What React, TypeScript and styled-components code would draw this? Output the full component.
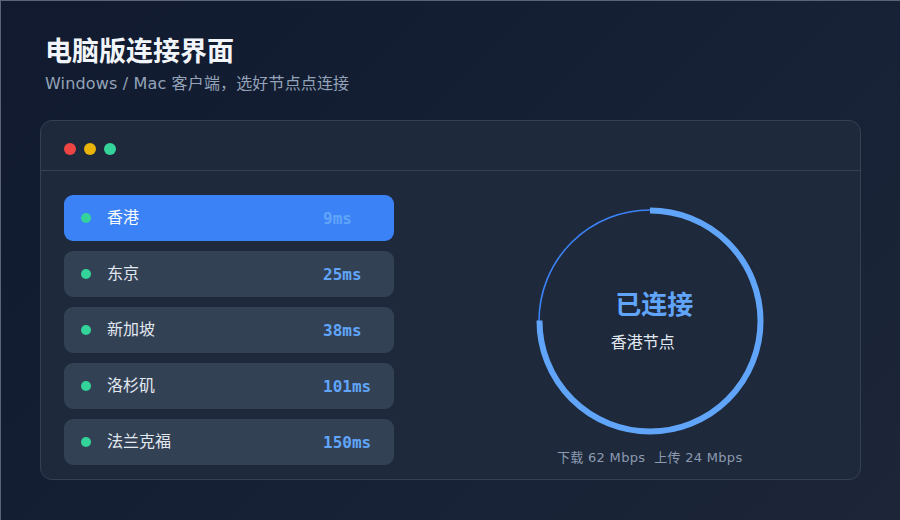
import styled, { createGlobalStyle } from "styled-components";

const GlobalStyle = createGlobalStyle`
  html, body {
    margin: 0;
    padding: 0;
    background: #111827;
  }
  body {
    font-family: "DejaVu Sans", "Noto Sans CJK SC", sans-serif;
  }
`;

const Page = styled.div`
  box-sizing: border-box;
  width: 900px;
  height: 520px;
  padding: 31px 40px 0 39px;
  border-top: 1px solid #5b6474;
  border-left: 1px solid #5b6474;
  background: linear-gradient(135deg, #111a2e 0%, #152035 50%, #1d2638 100%);
  overflow: hidden;
`;

const Intro = styled.header`
  padding-left: 5px;
`;

const Title = styled.h1`
  margin: 0;
  font-family: "Noto Sans CJK SC", sans-serif;
  font-size: 27px;
  line-height: 36px;
  font-weight: 700;
  color: #f1f5f9;
`;

const Subtitle = styled.p`
  margin: 5px 0 0;
  font-size: 16px;
  line-height: 22px;
  letter-spacing: 0.15px;
  color: #94a3b8;
`;

const Window = styled.section`
  box-sizing: border-box;
  margin-top: 25px;
  width: 821px;
  height: 360px;
  background: #1e293b;
  border: 1px solid #334155;
  border-radius: 12px;
  overflow: hidden;
`;

const TitleBar = styled.div`
  display: flex;
  gap: 8px;
  padding: 22px 23px 15px;
  border-bottom: 1px solid #334155;
`;

const Light = styled.span<{ $color: string }>`
  width: 12px;
  height: 12px;
  border-radius: 50%;
  background: ${(p) => p.$color};
`;

const Body = styled.div`
  display: grid;
  grid-template-columns: 1fr 1fr;
  gap: 24px;
  padding: 24px 23px 14px;
`;

const NodeList = styled.ul`
  list-style: none;
  margin: 0;
  padding: 0;
  display: flex;
  flex-direction: column;
  gap: 10px;
`;

const NodeRow = styled.li<{ $active?: boolean }>`
  box-sizing: border-box;
  width: 330px;
  height: 46px;
  display: grid;
  grid-template-columns: 10px 1fr 56px;
  align-items: center;
  column-gap: 16px;
  padding: 0 15px 0 17px;
  border-radius: 9px;
  background: ${(p) => (p.$active ? "#3b82f6" : "#334155")};
  color: ${(p) => (p.$active ? "#f8fafc" : "#e2e8f0")};
`;

const OnlineDot = styled.span`
  width: 10px;
  height: 10px;
  border-radius: 50%;
  background: #34d399;
`;

const NodeName = styled.span`
  font-size: 16px;
  line-height: 22px;
`;

const Latency = styled.span`
  font-family: "DejaVu Sans Mono", "Liberation Mono", monospace;
  font-weight: 700;
  font-size: 16px;
  color: #60a5fa;
`;

const StatusPane = styled.div`
  display: flex;
  flex-direction: column;
  align-items: center;
  padding-top: 12px;
  gap: 14px;
`;

const Dial = styled.div`
  display: grid;
  width: 228px;
  height: 228px;
  & > * {
    grid-area: 1 / 1;
  }
`;

const DialLabel = styled.div`
  display: flex;
  flex-direction: column;
  align-items: center;
  justify-content: center;
  gap: 10px;
`;

const State = styled.div`
  padding-left: 9px;
  font-size: 26px;
  line-height: 34px;
  font-weight: 700;
  color: #60a5fa;
`;

const Location = styled.div`
  padding-right: 14px;
  font-size: 16px;
  line-height: 22px;
  color: #e2e8f0;
`;

const Speed = styled.div`
  font-size: 13px;
  line-height: 18px;
  letter-spacing: 0.3px;
  color: #8c9bb1;
`;

const nodes = [
  { name: "香港", ms: 9 },
  { name: "东京", ms: 25 },
  { name: "新加坡", ms: 38 },
  { name: "洛杉矶", ms: 101 },
  { name: "法兰克福", ms: 150 },
];

function Ring({ progress }: { progress: number }) {
  const r = 110.5;
  const c = 2 * Math.PI * r;
  return (
    <svg width="228" height="228" viewBox="0 0 228 228">
      <circle cx="114" cy="114" r={r + 0.5} fill="none" stroke="#3b82f6" strokeWidth="1.6" />
      <circle
        cx="114"
        cy="114"
        r={r}
        fill="none"
        stroke="#60a5fa"
        strokeWidth="6"
        strokeDasharray={`${c * progress} ${c}`}
        transform="rotate(-90 114 114)"
      />
    </svg>
  );
}

export default function App() {
  return (
    <Page>
      <GlobalStyle />
      <Intro>
        <Title>电脑版连接界面</Title>
        <Subtitle>Windows / Mac 客户端，选好节点点连接</Subtitle>
      </Intro>
      <Window>
        <TitleBar>
          <Light $color="#ef4444" />
          <Light $color="#eab308" />
          <Light $color="#34d399" />
        </TitleBar>
        <Body>
          <NodeList>
            {nodes.map((n, i) => (
              <NodeRow key={n.name} $active={i === 0}>
                <OnlineDot />
                <NodeName>{n.name}</NodeName>
                <Latency>{n.ms}ms</Latency>
              </NodeRow>
            ))}
          </NodeList>
          <StatusPane>
            <Dial>
              <Ring progress={0.75} />
              <DialLabel>
                <State>已连接</State>
                <Location>香港节点</Location>
              </DialLabel>
            </Dial>
            <Speed>下载 62 Mbps&nbsp; 上传 24 Mbps</Speed>
          </StatusPane>
        </Body>
      </Window>
    </Page>
  );
}
